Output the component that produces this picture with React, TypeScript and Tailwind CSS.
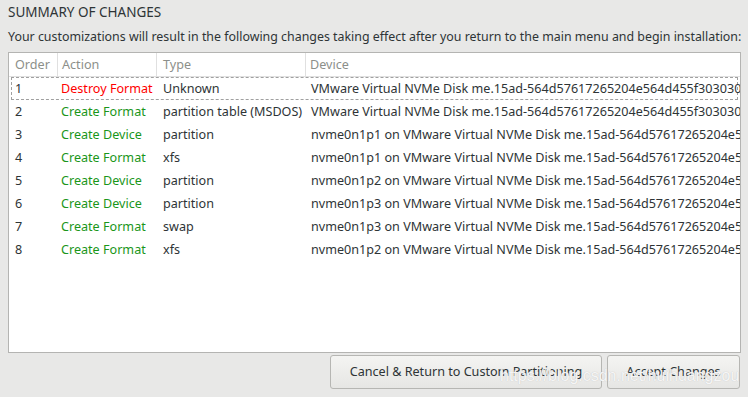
const rows = [
  { order: "1", action: "Destroy Format", destroy: true, type: "Unknown", device: "VMware Virtual NVMe Disk me.15ad-564d57617265204e564d455f30303030" },
  { order: "2", action: "Create Format", type: "partition table (MSDOS)", device: "VMware Virtual NVMe Disk me.15ad-564d57617265204e564d455f30303030" },
  { order: "3", action: "Create Device", type: "partition", device: "nvme0n1p1 on VMware Virtual NVMe Disk me.15ad-564d57617265204e564d455f3030" },
  { order: "4", action: "Create Format", type: "xfs", device: "nvme0n1p1 on VMware Virtual NVMe Disk me.15ad-564d57617265204e564d455f3030" },
  { order: "5", action: "Create Device", type: "partition", device: "nvme0n1p2 on VMware Virtual NVMe Disk me.15ad-564d57617265204e564d455f3030" },
  { order: "6", action: "Create Device", type: "partition", device: "nvme0n1p3 on VMware Virtual NVMe Disk me.15ad-564d57617265204e564d455f3030" },
  { order: "7", action: "Create Format", type: "swap", device: "nvme0n1p3 on VMware Virtual NVMe Disk me.15ad-564d57617265204e564d455f3030" },
  { order: "8", action: "Create Format", type: "xfs", device: "nvme0n1p2 on VMware Virtual NVMe Disk me.15ad-564d57617265204e564d455f3030" },
];

export default function App() {
  return (
    <div className="relative flex h-[397px] w-[748px] flex-col overflow-hidden bg-[#e8e8e7] px-2 font-['Noto_Sans',sans-serif] text-[12.6px] text-[#2e3436]">
      <h1 className="mt-[3px] h-[18px] text-[13.5px] leading-[18px]">SUMMARY OF CHANGES</h1>
      <p className="mt-[7px] h-[18px] whitespace-nowrap text-[12.4px] leading-[18px]">
        Your customizations will result in the following changes taking effect after you return to the main menu and begin installation:
      </p>
      <div className="mt-[6px] h-[301px] w-[733px] overflow-hidden border border-[#b4b4b2] bg-white">
        <div className="flex h-[24px] border-b border-[#e0e0e0] leading-[23px] text-[#8c8f8a]">
          <div className="w-[49px] shrink-0 border-r border-[#e0e0e0] pl-[6px]">Order</div>
          <div className="w-[99px] shrink-0 border-r border-[#e0e0e0] pl-[4px]">Action</div>
          <div className="w-[149px] shrink-0 border-r border-[#e0e0e0] pl-[6px]">Type</div>
          <div className="pl-[4px]">Device</div>
        </div>
        {rows.map((r, i) => (
          <div
            key={r.order}
            className={
              "mx-[2px] flex h-[23px] whitespace-nowrap leading-[21px] " +
              (i === 0 ? "border border-dashed border-[#a0a0a0]" : "border border-transparent")
            }
          >
            <div className="w-[49px] shrink-0 pl-[3px]">{r.order}</div>
            <div className={"w-[101px] shrink-0 " + (r.destroy ? "text-[#ff0000]" : "text-[#1a961a]")}>{r.action}</div>
            <div className="w-[148px] shrink-0 pl-[1px]">{r.type}</div>
            <div className="pl-[1px]">{r.device}</div>
          </div>
        ))}
      </div>
      <div className="mt-[2px] flex justify-end gap-[5px] pr-0">
        <button className="h-[34px] w-[272px] rounded-[3px] border border-[#b6b6b3] bg-gradient-to-b from-[#f4f4f2] to-[#e6e6e4] text-[12.6px] text-[#2e3436]">
          Cancel &amp; Return to Custom Partitioning
        </button>
        <button className="h-[34px] w-[133px] rounded-[3px] border border-[#b6b6b3] bg-gradient-to-b from-[#f4f4f2] to-[#e6e6e4] text-[12.6px] text-[#2e3436]">
          Accept Changes
        </button>
      </div>
      <span className="pointer-events-none absolute left-[500px] top-[366px] font-['Liberation_Sans',sans-serif] text-[16px] leading-[20px] text-white/85 [text-shadow:0_0_1px_#b8b8b8]">
        https://blog.csdn.net/huihuangzou
      </span>
    </div>
  );
}
